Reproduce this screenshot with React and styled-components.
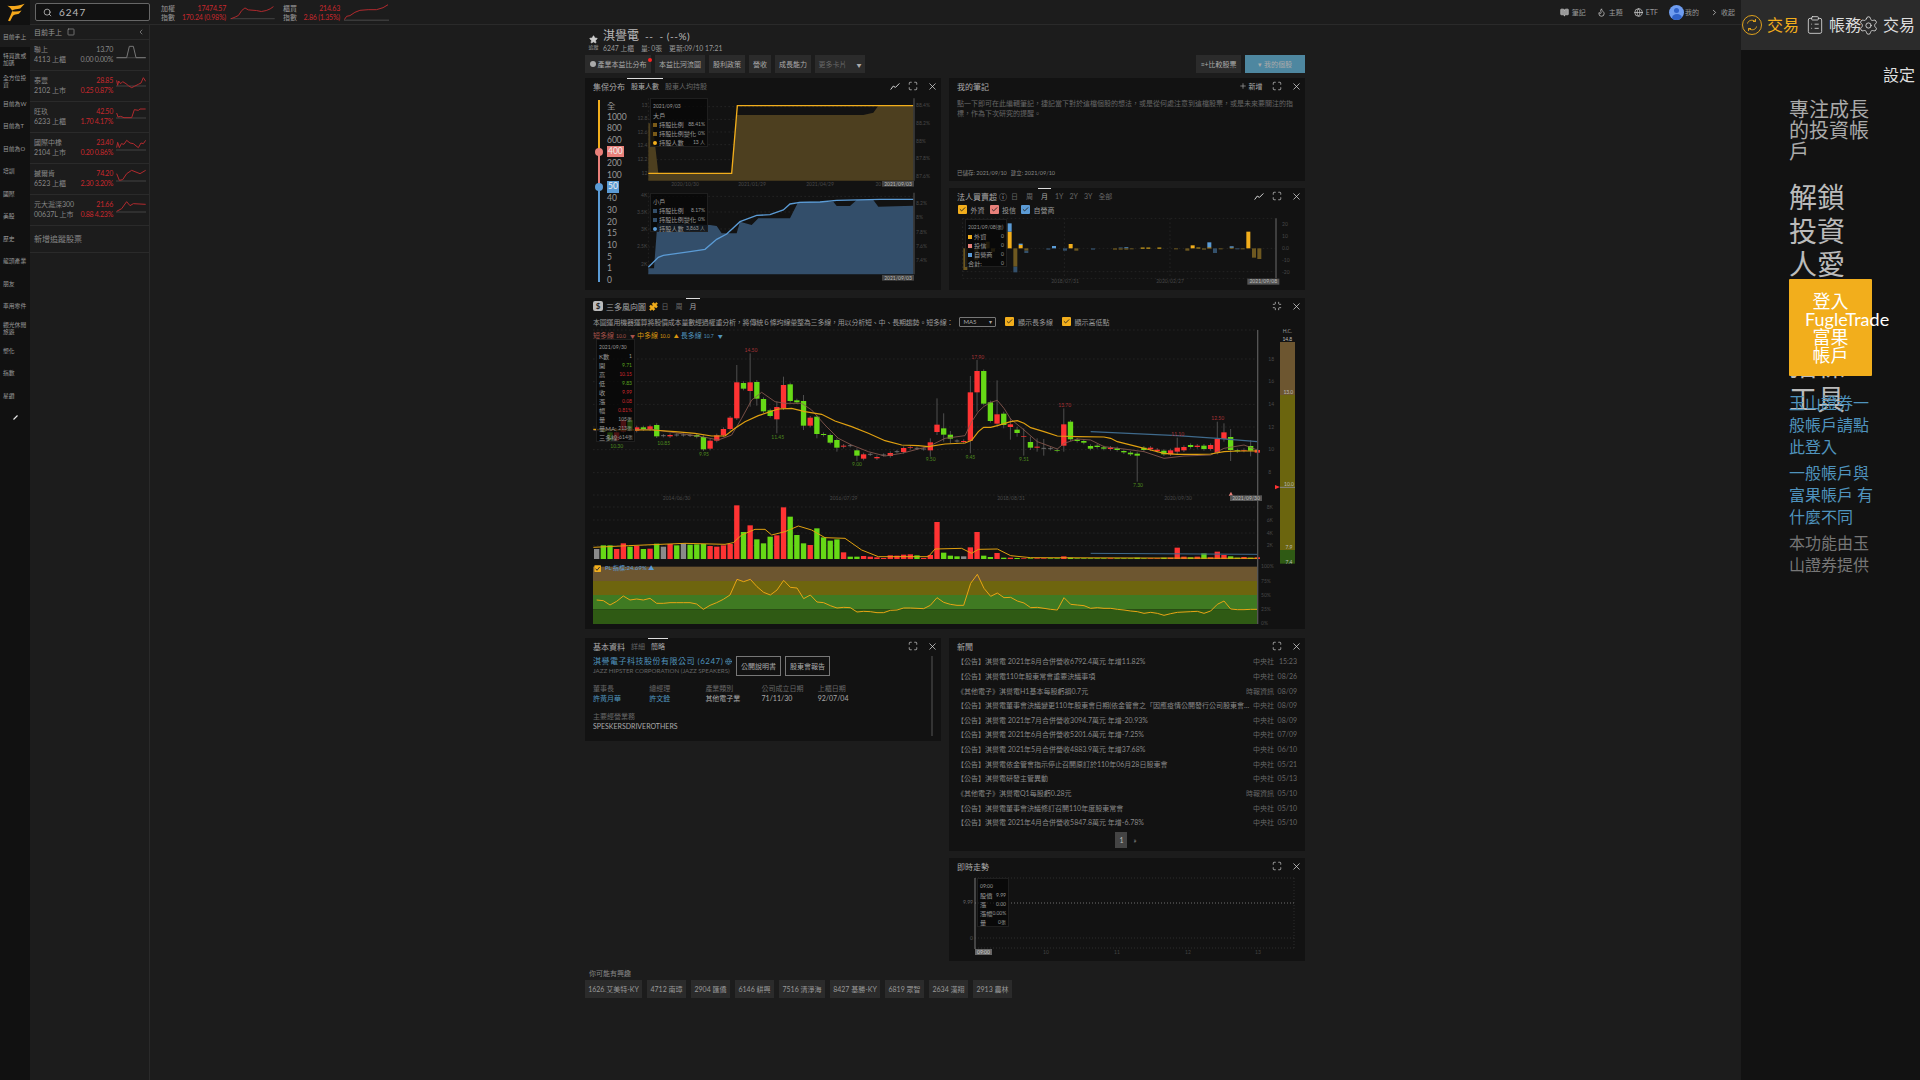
import React from "react";
import styled, { createGlobalStyle } from "styled-components";
import {
  BookOpen,
  Check,
  ChevronLeft,
  ChevronRight,
  ClipboardList,
  Flame,
  Globe,
  Maximize,
  Minimize,
  Plus,
  Puzzle,
  Search,
  Settings,
  Square,
  Star,
  X,
} from "lucide-react";

const ORANGE = "#f2ae1c";
const SALMON = "#e9807a";
const BLUE = "#5b9bd5";
const RED = "#ff3333";
const GREEN = "#66d916";

const GlobalStyle = createGlobalStyle`
  html, body { margin: 0; padding: 0; background: #1c1c1c; overflow: hidden; }
  body { font-family: Lato, "Noto Sans CJK TC", sans-serif; color: #aaa; }
  * { box-sizing: border-box; }
`;

const Page = styled.div`
  display: flex;
  width: 1920px;
  height: 1080px;
  overflow: hidden;
`;

/* left rail */
const Rail = styled.nav`
  width: 30px;
  flex: none;
  background: #111;
  display: flex;
  flex-direction: column;
`;
const LogoCell = styled.div`
  height: 25px;
  display: flex;
  align-items: center;
  justify-content: center;
`;
const RailItem = styled.div`
  height: 22.45px;
  padding: 0 2px 0 3px;
  display: flex;
  align-items: center;
  font-size: 5.8px;
  line-height: 7px;
  color: #999;
  background: ${(p) => (p.$active ? "#1c1c1c" : "transparent")};
`;
const RailPen = styled(RailItem)`
  justify-content: center;
`;

/* center column */
const Center = styled.div`
  flex: 1;
  display: flex;
  flex-direction: column;
  min-width: 0;
`;
const TopBar = styled.header`
  height: 25px;
  flex: none;
  display: flex;
  align-items: center;
  border-bottom: 1px solid #2a2a2a;
  padding: 0 6px 0 5px;
`;
const SearchBox = styled.div`
  width: 115px;
  height: 18px;
  display: flex;
  align-items: center;
  gap: 7px;
  padding-left: 7px;
  border: 1px solid #666;
  border-radius: 2px;
  background: #111;
  font-size: 10px;
  letter-spacing: 1px;
  color: #bbb;
`;
const IndexBlock = styled.div`
  margin-left: ${(p) => p.$ml}px;
  display: flex;
  align-items: center;
`;
const IndexLabels = styled.div`
  font-size: 7px;
  line-height: 9px;
  color: #999;
  width: 19px;
  padding-top: 1px;
`;
const IndexValues = styled.div`
  width: ${(p) => p.$w}px;
  padding-top: 1px;
  text-align: right;
  font-size: 7px;
  line-height: 9px;
  color: #c8282d;
  letter-spacing: -0.2px;
  white-space: nowrap;
`;
const Spark = styled.svg`
  display: block;
  flex: none;
  margin-left: ${(p) => p.$ml || 0}px;
`;
const TopRight = styled.div`
  margin-left: auto;
  display: flex;
  align-items: center;
`;
const TopLink = styled.div`
  display: flex;
  align-items: center;
  gap: ${(p) => p.$gap ?? 3}px;
  margin-left: ${(p) => p.$ml}px;
  font-size: 7px;
  color: #999;
`;
const Avatar = styled.div`
  width: 15px;
  height: 15px;
  border-radius: 50%;
  background: #6f9df0;
  position: relative;
  overflow: hidden;
  &::before {
    content: "";
    position: absolute;
    left: 5px;
    top: 3px;
    width: 5px;
    height: 5px;
    border-radius: 50%;
    background: #2f62c9;
  }
  &::after {
    content: "";
    position: absolute;
    left: 2.5px;
    top: 9px;
    width: 10px;
    height: 8px;
    border-radius: 50%;
    background: #2f62c9;
  }
`;

const Body = styled.div`
  flex: 1;
  display: flex;
  min-height: 0;
`;

/* watch list */
const Watch = styled.aside`
  width: 120px;
  flex: none;
  border-right: 1px solid #2a2a2a;
`;
const WatchHead = styled.div`
  height: 15px;
  display: flex;
  align-items: center;
  gap: 5px;
  padding: 0 4px 0 4px;
  font-size: 7px;
  color: #999;
  border-bottom: 1px solid #2a2a2a;
`;
const WatchChevron = styled.span`
  margin-left: auto;
  display: flex;
`;
const WatchRow = styled.div`
  height: 31px;
  display: flex;
  align-items: center;
  padding-left: 4px;
  border-bottom: 1px solid #2a2a2a;
  font-size: 7px;
  line-height: 9.8px;
`;
const WatchName = styled.div`
  width: 40px;
  color: #888;
  white-space: nowrap;
`;
const WatchNums = styled.div`
  width: 39px;
  text-align: right;
  letter-spacing: -0.25px;
  white-space: nowrap;
  color: ${(p) => (p.$up ? "#c8282d" : "#888")};
`;
const WatchAdd = styled.div`
  height: 27px;
  display: flex;
  align-items: center;
  padding: 0 0 2px 4px;
  border-bottom: 1px solid #2a2a2a;
  font-size: 8px;
  color: #888;
`;

/* main */
const Main = styled.main`
  flex: 1;
  min-width: 0;
  padding: 1px 0 0 435px;
`;
const Column = styled.div`
  width: 720px;
`;
const TitleRow = styled.div`
  height: 29px;
  display: flex;
  align-items: center;
  padding-left: 2px;
  gap: 3px;
`;
const StarCol = styled.div`
  width: 13px;
  display: flex;
  flex-direction: column;
  align-items: center;
  padding-top: 4px;
  font-size: 5px;
  line-height: 6px;
  color: #999;
`;
const TitleText = styled.div`
  display: flex;
  flex-direction: column;
`;
const TitleName = styled.div`
  font-size: 12px;
  line-height: 13px;
  color: #bbb;
  display: flex;
  align-items: baseline;
  gap: 6px;
  & > span {
    font-size: 10px;
    letter-spacing: 0.5px;
  }
`;
const TitleSub = styled.div`
  font-size: 6.8px;
  line-height: 10px;
  color: #999;
  display: flex;
  gap: 7px;
`;
const Tabs = styled.div`
  height: 18px;
  display: flex;
  gap: 4px;
  margin-bottom: 5px;
`;
const Tab = styled.div`
  position: relative;
  width: ${(p) => p.$w}px;
  height: 18px;
  display: flex;
  align-items: center;
  justify-content: center;
  gap: 2px;
  font-size: 7px;
  white-space: nowrap;
  color: ${(p) => (p.$dim ? "#666" : "#aaa")};
  background: ${(p) => p.$bg || "#2b2b2b"};
  margin-left: ${(p) => (p.$push ? "auto" : "0")};
`;
const RedDot = styled.i`
  position: absolute;
  right: -1px;
  top: 3px;
  width: 4px;
  height: 4px;
  border-radius: 50%;
  background: #f22;
`;
const Coin = styled.i`
  width: 6px;
  height: 6px;
  border-radius: 50%;
  background: #aaa;
`;
const Caret = styled.span`
  margin-left: 8px;
  font-size: 5px;
  color: #aaa;
`;

const TopGrid = styled.div`
  display: grid;
  grid-template-columns: 356px 356px;
  grid-template-rows: 103px 102px;
  gap: 7px 8px;
`;
const Card = styled.section`
  background: #121212;
  position: relative;
  display: flex;
  flex-direction: column;
  grid-row: ${(p) => p.$span || "auto"};
  margin-top: ${(p) => p.$mt || 0}px;
  height: ${(p) => (p.$h ? `${p.$h}px` : "auto")};
`;
const CardHead = styled.div`
  height: 16px;
  flex: none;
  display: flex;
  align-items: stretch;
  padding: 0 3.5px 0 8px;
  gap: 6px;
`;
const CardTitle = styled.div`
  display: flex;
  align-items: center;
  gap: 3px;
  font-size: 8px;
  color: #aaa;
  margin-right: ${(p) => p.$mr || 0}px;
`;
const SubTab = styled.div`
  position: relative;
  display: flex;
  align-items: center;
  font-size: 7px;
  padding: 0 ${(p) => p.$pad || 0}px;
  color: ${(p) => (p.$active ? "#aaa" : "#666")};
  &::before {
    content: "";
    display: ${(p) => (p.$active ? "block" : "none")};
    position: absolute;
    left: ${(p) => -(p.$bar || 2)}px;
    right: ${(p) => -(p.$bar || 2)}px;
    top: 0;
    height: 1px;
    background: #ddd;
  }
`;
const HeadTools = styled.div`
  margin-left: auto;
  display: flex;
  align-items: center;
  gap: 8.5px;
  color: #ddd;
`;
const AddNote = styled.div`
  display: flex;
  align-items: center;
  gap: 2px;
  font-size: 7px;
  color: #aaa;
  margin-right: 1px;
`;

const NoteText = styled.div`
  padding: 4px 8px 0;
  font-size: 7px;
  line-height: 10.3px;
  color: #666;
`;
const NoteFoot = styled.div`
  margin-top: auto;
  padding: 0 8px 4px;
  font-size: 5.5px;
  line-height: 8px;
  color: #888;
  display: flex;
  gap: 4px;
`;

const ChipRow = styled.div`
  display: flex;
  align-items: center;
  gap: ${(p) => p.$gap || 5}px;
  height: ${(p) => p.$h}px;
  padding: ${(p) => p.$pad};
  font-size: 7px;
  color: #999;
  flex: none;
`;
const CheckItem = styled.label`
  display: flex;
  align-items: center;
  gap: 3.5px;
`;
const CheckBox = styled.span`
  width: 9px;
  height: 9px;
  display: flex;
  align-items: center;
  justify-content: center;
  border-radius: 1px;
  background: ${(p) => p.$c};
  color: #222;
`;

const SplitRow = styled.div`
  flex: 1;
  display: flex;
  min-height: 0;
`;
const SliderCol = styled.div`
  position: relative;
  width: 55px;
  flex: none;
  padding: 5px 0 0 22px;
`;
const Track = styled.div`
  position: absolute;
  left: 13px;
  top: 6px;
  width: 2px;
  display: flex;
  flex-direction: column;
`;
const TrackSeg = styled.i`
  display: block;
  height: ${(p) => p.$h}px;
  background: ${(p) => p.$c};
`;
const Thumb = styled.i`
  position: absolute;
  left: 10px;
  top: ${(p) => p.$t}px;
  width: 8px;
  height: 8px;
  border-radius: 50%;
  background: ${(p) => p.$c};
`;
const Level = styled.div`
  height: 11.7px;
  display: flex;
  align-items: center;
  font-size: 8.5px;
  color: #999;
`;
const LevelBadge = styled.span`
  padding: 0 1px;
  line-height: 11.7px;
  color: #eee;
  background: ${(p) => p.$c};
`;
const ChartWrap = styled.div`
  position: relative;
  flex: none;
  width: ${(p) => p.$w}px;
  height: ${(p) => p.$h}px;
`;
const ChartSvg = styled.svg`
  display: block;
  position: relative;
  overflow: visible;
`;
const Tx = styled.text`
  font-size: ${(p) => p.$s || 15}px;
  fill: ${(p) => p.$c || "#484848"};
`;
const Tip = styled.div`
  position: absolute;
  left: ${(p) => p.$l}px;
  top: ${(p) => p.$t}px;
  width: ${(p) => p.$w}px;
  height: ${(p) => p.$h}px;
  padding: 3px 2px;
  background: rgba(6, 6, 6, 0.72);
  border: 1px solid #1f1f1f;
  font-size: 6.2px;
  line-height: ${(p) => p.$lh || 9}px;
  color: #999;
`;
const TipDate = styled.div`
  font-size: 5px;
  color: #999;
  white-space: nowrap;
`;
const TipRow = styled.div`
  display: flex;
  align-items: center;
  justify-content: space-between;
  white-space: nowrap;
`;
const TipLabel = styled.span`
  display: flex;
  align-items: center;
  gap: 2px;
`;
const TipSwatch = styled.i`
  width: 4px;
  height: 4px;
  border-radius: ${(p) => (p.$round ? "50%" : "0")};
  background: ${(p) => p.$c};
`;
const TipVal = styled.span`
  font-size: 5px;
  color: ${(p) => p.$c || "#999"};
`;

const DescRow = styled.div`
  height: 15px;
  flex: none;
  display: flex;
  align-items: center;
  padding: 0 8px;
  gap: 9px;
  font-size: 7px;
  color: #999;
  white-space: nowrap;
`;
const DescText = styled.span`
  letter-spacing: -0.2px;
  margin-right: -3px;
`;
const SelectBox = styled.div`
  width: 37px;
  height: 10px;
  padding: 0 3px;
  display: flex;
  align-items: center;
  justify-content: space-between;
  border: 1px solid #777;
  border-radius: 1px;
  font-size: 6px;
  color: #aaa;
`;
const Legend = styled.div`
  position: absolute;
  left: 8px;
  top: 0;
  height: 11px;
  display: flex;
  align-items: center;
  gap: 2px;
  font-size: 7px;
`;
const LegendItem = styled.span`
  color: ${(p) => p.$c};
  display: flex;
  align-items: baseline;
  gap: 2px;
  & > small {
    font-size: 5px;
  }
  & > em {
    font-style: normal;
    font-size: 5px;
    margin-left: 2px;
  }
`;
const Dollar = styled.span`
  width: 10px;
  height: 10px;
  border-radius: 2px;
  background: #bbb;
  color: #222;
  font-size: 8px;
  font-weight: 700;
  display: flex;
  align-items: center;
  justify-content: center;
`;

const LowerGrid = styled.div`
  display: grid;
  grid-template-columns: 356px 356px;
  gap: 8px;
  margin-top: 9px;
  align-items: start;
`;
const RightStack = styled.div`
  display: flex;
  flex-direction: column;
  gap: 7px;
`;
const CompanyRow = styled.div`
  display: flex;
  padding: 2px 8px 0;
  height: 22px;
`;
const CompanyName = styled.div`
  width: 143px;
`;
const CompanyLink = styled.div`
  display: flex;
  align-items: center;
  gap: 2px;
  font-size: 8px;
  line-height: 11px;
  letter-spacing: 0.5px;
  color: #4f93bd;
  white-space: nowrap;
`;
const CompanyEn = styled.div`
  font-size: 6.2px;
  line-height: 7px;
  color: #666;
  white-space: nowrap;
`;
const DocButton = styled.div`
  width: 45px;
  height: 20px;
  margin-right: 4px;
  display: flex;
  align-items: center;
  justify-content: center;
  border: 1px solid #777;
  font-size: 7px;
  color: #aaa;
`;
const InfoGrid = styled.div`
  display: grid;
  grid-template-columns: repeat(5, 56.2px);
  padding: 8px 8px 0;
`;
const InfoLabel = styled.div`
  font-size: 7px;
  line-height: 9.5px;
  color: #666;
`;
const InfoValue = styled.div`
  font-size: 7px;
  line-height: 9.5px;
  white-space: nowrap;
  color: ${(p) => (p.$link ? "#4f93bd" : "#aaa")};
`;
const InfoBlock = styled.div`
  padding: 9px 8px 0;
`;
const ScrollBar = styled.i`
  position: absolute;
  left: 346px;
  top: 18px;
  width: 2px;
  height: 80px;
  background: #333;
`;

const NewsList = styled.div`
  display: flex;
  flex-direction: column;
`;
const NewsRow = styled.div`
  height: 14.64px;
  display: flex;
  align-items: center;
  padding: 0 8px 0 8px;
  font-size: 7px;
  color: #888;
  white-space: nowrap;
`;
const NewsTitle = styled.div`
  flex: 1;
  min-width: 0;
  overflow: hidden;
  text-overflow: ellipsis;
`;
const NewsSource = styled.div`
  margin-left: 2px;
  color: #666;
`;
const NewsDate = styled.div`
  width: 20px;
  margin-left: 3px;
  text-align: right;
  color: #666;
`;
const Pager = styled.div`
  display: flex;
  justify-content: center;
  align-items: center;
  gap: 6px;
  margin-top: 2px;
  padding-right: 2px;
  font-size: 7px;
  color: #999;
`;
const PageCurrent = styled.div`
  width: 12px;
  height: 16px;
  display: flex;
  align-items: center;
  justify-content: center;
  background: #444;
  color: #bbb;
`;

const RelatedLabel = styled.div`
  margin-top: 6px;
  height: 13px;
  padding-left: 4px;
  font-size: 7px;
  line-height: 13px;
  color: #888;
`;
const Chips = styled.div`
  display: flex;
  gap: 5px;
`;
const Chip = styled.div`
  width: ${(p) => p.$w}px;
  height: 18px;
  display: flex;
  align-items: center;
  justify-content: center;
  background: #2b2b2b;
  font-size: 7px;
  color: #999;
  white-space: nowrap;
`;

/* side panel */
const Side = styled.aside`
  width: 179px;
  flex: none;
  background: #121212;
  display: flex;
  flex-direction: column;
`;
const SideHead = styled.div`
  height: 50px;
  flex: none;
  background: #2b2b2b;
  display: flex;
  align-items: flex-start;
  padding-left: 1px;
`;
const SideTab = styled.div`
  display: flex;
  align-items: center;
  height: 50px;
  flex: none;
  margin-left: ${(p) => p.$ml || 0}px;
  color: ${(p) => (p.$active ? ORANGE : "#ddd")};
`;
const SideTabText = styled.div`
  width: 32px;
  margin-left: ${(p) => p.$ml}px;
  font-size: 16px;
  line-height: 50px;
  align-self: flex-start;
`;
const SideBody = styled.div`
  padding: 49px 0 0 48px;
  width: 132px;
`;
const SideTitle = styled.h3`
  margin: 0;
  width: 83px;
  font-size: 20px;
  line-height: 21px;
  font-weight: 400;
  color: #aaa;
`;
const SideHeadline = styled.h2`
  margin: 19px 0 0;
  width: 83px;
  height: 98px;
  font-size: 28px;
  line-height: 33.6px;
  font-weight: 400;
  color: #bbb;
`;
const LoginButton = styled.button`
  position: relative;
  display: block;
  width: 83px;
  height: 97px;
  padding: 1px 16px 0;
  border: 0;
  border-radius: 1px;
  background: ${ORANGE};
  color: #fff;
  font-family: inherit;
  font-size: 18px;
  line-height: 18px;
  text-align: center;
  vertical-align: top;
`;
const SideLink = styled.div`
  width: 85px;
  margin-top: ${(p) => p.$mt}px;
  font-size: 16px;
  line-height: 22px;
  color: ${(p) => p.$c || "#4f93bd"};
`;

/* ---------- chart helpers ---------- */
const pts = (list) => list.map((p) => p.join(",")).join(" ");
const shift = (list, dx) => list.map(([x, y]) => [x + dx, y]);

const Dashes = ({ x1, x2, ys, vs = [], y1, y2 }) => (
  <g stroke="#2c2c2c" strokeWidth="2" strokeDasharray="5 7">
    {ys.map((y) => (
      <line key={y} x1={x1} x2={x2} y1={y} y2={y} />
    ))}
    {vs.map((x) => (
      <line key={x} x1={x} x2={x} y1={y1} y2={y2} />
    ))}
  </g>
);

const Sparkline = ({ box, line, base, color, width, height, ml }) => (
  <Spark viewBox={box} width={width} height={height} $ml={ml}>
    <line
      x1={box.split(" ")[0]}
      x2={Number(box.split(" ")[0]) + Number(box.split(" ")[2])}
      y1={base}
      y2={base}
      stroke="#3a3a3a"
      strokeWidth="4"
    />
    <polyline points={pts(line)} fill="none" stroke={color} strokeWidth="3" />
  </Spark>
);

const TrendIcon = () => (
  <svg width="10" height="7" viewBox="0 0 22 16" fill="none" stroke="#ddd" strokeWidth="2.2">
    <polyline points="1,15 7,7 12,10 21,1" />
  </svg>
);

const PenIcon = () => (
  <svg width="5" height="5" viewBox="0 0 5 5">
    <line x1="0.5" y1="4.5" x2="4.5" y2="0.5" stroke="#eee" strokeWidth="1.1" />
  </svg>
);

const Logo = () => (
  <svg width="19" height="19" viewBox="18 8 56 56">
    <path d="M73 10 L60 24 C50 26 42 26 36 30 C32 24 28 20 22 16 C38 18 56 16 73 10Z" fill="#f5a81c" />
    <path d="M64 30 L56 40 C48 42 42 42 38 46 L30 62 L24 60 C30 48 34 38 36 32 C44 34 54 34 64 30Z" fill="#f5a81c" />
  </svg>
);

const TradeIcon = () => (
  <svg width="20" height="20" viewBox="0 0 20 20" fill="none" stroke={ORANGE} strokeWidth="0.9">
    <circle cx="10" cy="10" r="9.5" />
    <path d="M5.5 8.5 C6 5.5 10 4 13.5 6.5 M13.5 6.5 V4 M13.5 6.5 H11" />
    <path d="M14.5 11.5 C14 14.5 10 16 6.5 13.5 M6.5 13.5 V16 M6.5 13.5 H9" />
  </svg>
);

/* ---------- data ---------- */
const railItems = [
  "目前手上", "特買進或加碼", "全方位投資", "目前為W", "目前為T", "目前為O", "培訓", "國際", "美股",
  "歷史", "龍頭產業", "朋友", "車用零件", "觀光休閒旅遊", "塑化", "指數", "星鑽",
];

const watchRows = [
  { name: "聯上", code: "4113 上櫃", price: "13.70", chg: "0.00 0.00%", up: false, box: "348 119 90 93", base: 172, color: "#777",
    line: [[350, 172], [380, 172], [388, 138], [400, 138], [408, 172], [437, 172]] },
  { name: "泰豐", code: "2102 上市", price: "28.85", chg: "0.25 0.87%", up: true, box: "348 212 90 93", base: 257, color: "#b22a2e",
    line: [[350, 240], [353, 255], [356, 242], [362, 250], [368, 244], [378, 250], [385, 256], [395, 262], [403, 258], [415, 252], [423, 248], [430, 232], [437, 243]] },
  { name: "旺玖", code: "6233 上櫃", price: "42.50", chg: "1.70 4.17%", up: true, box: "348 305 90 93", base: 353, color: "#b22a2e",
    line: [[350, 338], [354, 350], [362, 348], [372, 352], [395, 352], [403, 328], [415, 330], [420, 326], [437, 326]] },
  { name: "國際中橡", code: "2104 上市", price: "23.40", chg: "0.20 0.86%", up: true, box: "348 398 90 93", base: 449, color: "#b22a2e",
    line: [[350, 442], [353, 426], [358, 442], [364, 430], [372, 432], [380, 420], [390, 428], [400, 430], [415, 442], [423, 428], [430, 430], [437, 420]] },
  { name: "撼爾肯", code: "6523 上櫃", price: "74.20", chg: "2.30 3.20%", up: true, box: "348 491 90 93", base: 542, color: "#b22a2e",
    line: [[350, 520], [358, 540], [368, 538], [380, 520], [395, 510], [420, 520], [437, 510]] },
  { name: "元大滬深300", code: "00637L 上市", price: "21.66", chg: "0.88 4.23%", up: true, box: "348 584 90 93", base: 635, color: "#b22a2e",
    line: [[350, 633], [365, 625], [380, 604], [390, 616], [400, 610], [437, 612]] },
];

const levels = ["全", "1000", "800", "600", "400", "200", "100", "50", "40", "30", "20", "15", "10", "5", "1", "0"];

const newsRows = [
  ["【公告】淇譽電 2021年8月合併營收6792.4萬元 年增11.82%", "中央社", "15:23"],
  ["【公告】淇譽電110年股東常會重要決議事項", "中央社", "08/26"],
  ["《其他電子》淇譽電H1基本每股虧損0.7元", "時報資訊", "08/09"],
  ["【公告】淇譽電董事會決議變更110年股東會日期(依金管會之「因應疫情公開發行公司股東會延期召開相關事項", "中央社", "08/09"],
  ["【公告】淇譽電 2021年7月合併營收3094.7萬元 年增-20.93%", "中央社", "08/09"],
  ["【公告】淇譽電 2021年6月合併營收5201.6萬元 年增-7.25%", "中央社", "07/09"],
  ["【公告】淇譽電 2021年5月合併營收4883.9萬元 年增37.68%", "中央社", "06/10"],
  ["【公告】淇譽電依金管會指示停止召開原訂於110年06月28日股東會", "中央社", "05/21"],
  ["【公告】淇譽電研發主管異動", "中央社", "05/13"],
  ["《其他電子》淇譽電Q1每股虧0.28元", "時報資訊", "05/10"],
  ["【公告】淇譽電董事會決議修訂召開110年度股東常會", "中央社", "05/10"],
  ["【公告】淇譽電 2021年4月合併營收5847.8萬元 年增-6.78%", "中央社", "05/10"],
];

const chips = [
  ["1626 艾美特-KY", 57], ["4712 南璋", 39], ["2904 匯僑", 39], ["6146 耕興", 39], ["7516 清淨海", 46],
  ["8427 基勝-KY", 50], ["6819 眾智", 39], ["2634 漢翔", 39], ["2913 農林", 39],
];

// [type, top, bottom, volume top], in 3x coordinates of the chart
const candles = [
  ["n", 405, 405, 762], ["g", 405, 410, 751], ["g", 412, 436, 751], ["r", 412, 436, 762], ["r", 375, 410, 745],
  ["g", 375, 405, 755], ["r", 397, 407, 753], ["g", 397, 403, 762], ["r", 394, 403, 761], ["g", 390, 424, 746],
  ["n", 422, 422, 755], ["r", 420, 424, 747], ["n", 420, 420, 751], ["n", 420, 420, 745], ["n", 421, 421, 749],
  ["g", 420, 425, 748], ["g", 426, 463, 747], ["r", 437, 461, 753], ["r", 421, 437, 755], ["r", 402, 421, 751],
  ["r", 368, 402, 747], ["r", 262, 370, 631], ["g", 264, 281, 711], ["r", 262, 288, 691], ["g", 261, 311, 733],
  ["g", 312, 349, 745], ["g", 346, 363, 725], ["r", 336, 373, 721], ["r", 270, 340, 637], ["g", 268, 318, 665],
  ["g", 316, 322, 720], ["g", 318, 392, 745], ["r", 368, 392, 750], ["g", 365, 417, 700], ["g", 417, 420, 727],
  ["g", 420, 443, 737], ["g", 435, 458, 733], ["r", 452, 455, 772], ["n", 452, 452, 785], ["g", 466, 482, 785],
  ["r", 478, 491, 783], ["n", 478, 478, 785], ["r", 486, 490, 787], ["n", 480, 480, 789], ["r", 474, 483, 781],
  ["n", 470, 470, 782], ["r", 459, 471, 779], ["r", 457, 459, 778], ["n", 460, 460, 781], ["n", 462, 462, 789],
  ["r", 442, 466, 780], ["r", 389, 411, 681], ["g", 400, 419, 773], ["g", 419, 431, 782], ["n", 438, 438, 784],
  ["r", 438, 441, 784], ["r", 292, 437, 757], ["r", 228, 292, 711], ["g", 228, 326, 782], ["g", 322, 378, 786],
  ["r", 358, 386, 774], ["g", 356, 390, 788], ["r", 388, 396, 788], ["g", 404, 414, 789], ["r", 423, 425, 790],
  ["g", 441, 458, 790], ["r", 455, 458, 790], ["n", 460, 460, 790], ["n", 461, 461, 790], ["g", 465, 467, 790],
  ["r", 388, 452, 784], ["g", 380, 433, 788], ["g", 434, 438, 790], ["g", 438, 443, 790], ["g", 453, 461, 790],
  ["g", 452, 456, 790], ["g", 457, 461, 790], ["r", 458, 462, 790], ["g", 460, 465, 790], ["g", 468, 472, 790],
  ["g", 473, 478, 790], ["g", 476, 482, 788], ["g", 458, 465, 790], ["r", 458, 463, 790], ["r", 464, 468, 790],
  ["g", 467, 478, 788], ["r", 466, 478, 788], ["r", 458, 470, 758], ["r", 456, 466, 785], ["g", 450, 456, 787],
  ["r", 452, 456, 785], ["g", 452, 462, 775], ["r", 450, 462, 787], ["r", 432, 472, 770], ["r", 412, 432, 780],
  ["g", 426, 465, 784], ["g", 466, 469, 788], ["r", 465, 467, 786], ["g", 453, 467, 788], ["r", 465, 473, 787],
];

const wicks = {
  21: [210, 375], 23: [175, 335], 24: [255, 332], 27: [320, 415], 28: [245, 345], 31: [300, 405], 33: [360, 430],
  36: [430, 470], 39: [460, 498], 50: [430, 485], 51: [310, 420], 52: [355, 440], 53: [408, 445], 56: [243, 475],
  57: [195, 350], 60: [256, 395], 61: [350, 400], 62: [370, 434], 63: [395, 425], 64: [400, 482], 65: [425, 465],
  66: [430, 470], 67: [432, 482], 70: [340, 470], 81: [470, 560], 87: [428, 480], 93: [380, 478], 94: [385, 440],
  95: [402, 498], 98: [435, 484],
};

const midLine = [
  [25, 403], [100, 405], [200, 405], [270, 410], [330, 415], [380, 423], [420, 423], [450, 400], [480, 380], [520, 362],
  [580, 342], [620, 340], [660, 350], [710, 358], [750, 378], [800, 395], [850, 415], [900, 437], [950, 450], [1000, 452],
  [1030, 455], [1080, 447], [1140, 444], [1160, 436], [1180, 410],
  ...shift(
    [[71, 397], [92, 397], [112, 392], [132, 386], [152, 380], [172, 377], [192, 385], [212, 398], [252, 410], [292, 423],
      [352, 425], [432, 426], [452, 430], [472, 440], [532, 455], [572, 465], [612, 475], [652, 478], [712, 478], [752, 477],
      [792, 470], [832, 468], [892, 468]],
    1125
  ),
];
const shortLine = [
  [25, 405], [200, 403], [350, 425], [400, 435], [440, 420], [470, 370], [500, 315], [530, 292], [570, 320], [600, 325],
  [650, 325], [680, 345], [720, 390], [760, 430], [800, 450], [850, 470], [900, 483], [950, 475], [1000, 462], [1030, 455],
  [1080, 430], [1140, 422], [1160, 380], [1180, 350],
  ...shift(
    [[71, 335], [92, 322], [112, 316], [132, 340], [152, 372], [192, 405], [232, 440], [292, 462], [312, 445], [352, 432],
      [392, 435], [432, 455], [492, 462], [552, 470], [612, 490], [672, 483], [752, 480], [792, 460], [852, 450], [892, 465]],
    1125
  ),
];
const longLine = shift([[392, 410], [652, 422], [772, 430], [892, 440]], 1125);
const volAvg = [
  [25, 757], [130, 752], [300, 745], [420, 748], [445, 743], [470, 720], [510, 703], [540, 703], [560, 720], [600, 710],
  [640, 693], [680, 705], [720, 728], [780, 730], [830, 765], [880, 785], [1030, 785], [1050, 762], [1130, 760], [1160, 775],
  [1180, 763], [1237, 762], [1277, 782], [1337, 788], [2017, 790],
];
const plLine = [
  ...[[35, 300], [55, 302], [75, 315], [95, 304], [115, 288], [135, 300], [155, 297], [175, 300], [195, 295], [215, 310], [235, 310],
    [255, 308], [275, 308], [295, 308], [315, 308], [335, 312], [355, 328], [375, 316], [395, 308], [415, 298], [435, 285], [456, 238],
    [476, 245], [496, 238], [516, 260], [536, 277], [556, 285], [576, 270], [596, 241], [616, 262], [636, 264], [656, 296], [676, 285],
    [696, 306], [716, 308], [736, 317], [756, 324], [776, 322], [796, 323], [816, 336], [836, 334], [856, 335], [876, 338], [896, 338],
    [916, 331], [936, 330], [956, 324], [976, 324], [996, 325], [1016, 326], [1036, 316], [1056, 293], [1076, 307], [1096, 313],
    [1116, 316], [1136, 316]].map(([x, y]) => [x, y + 615]),
  ...shift(
    [[32, 865], [52, 838], [72, 880], [92, 904], [112, 894], [132, 908], [152, 907], [172, 918], [192, 924], [212, 938], [232, 937],
      [252, 940], [272, 943], [292, 945], [312, 908], [332, 928], [352, 930], [372, 932], [392, 940], [412, 938], [432, 940], [452, 940],
      [472, 943], [492, 945], [512, 948], [532, 950], [552, 955], [572, 952], [592, 955], [612, 961], [632, 956], [652, 952], [672, 951],
      [692, 950], [712, 949], [732, 955], [752, 948], [772, 928], [792, 918], [812, 942], [832, 944], [852, 944], [872, 943], [892, 943]],
    1125
  ),
];

const peaks = [
  ["14.50", 498, 172, "#a83237"], ["17.90", 1178, 193, "#a83237"], ["13.70", 1439, 337, "#a83237"], ["11.10", 1778, 424, "#a83237"],
  ["12.50", 1898, 376, "#a83237"], ["10.30", 95, 460, "#4e8a1e"], ["10.85", 236, 451, "#4e8a1e"], ["9.95", 357, 483, "#4e8a1e"],
  ["11.45", 578, 432, "#4e8a1e"], ["9.00", 816, 513, "#4e8a1e"], ["9.50", 1037, 499, "#4e8a1e"], ["9.45", 1156, 493, "#4e8a1e"],
  ["9.51", 1317, 498, "#4e8a1e"], ["7.30", 1659, 577, "#4e8a1e"],
];

// [x, top, bottom, colour]
const instBars = [
  [76, 625, 690, "#6e5820"], [92, 618, 625, "#6e5820"], [109, 625, 660, "#6e5820"], [143, 605, 625, "#6e5820"], [159, 625, 635, "#6e5820"],
  [209, 575, 625, ORANGE], [209, 550, 575, BLUE], [226, 625, 680, "#6e5820"], [226, 680, 697, "#33506b"], [242, 615, 625, ORANGE],
  [242, 611, 615, BLUE], [259, 625, 632, "#6e5820"], [259, 632, 639, "#33506b"], [325, 625, 629, "#33506b"], [342, 618, 625, BLUE],
  [375, 625, 632, "#33506b"], [392, 612, 625, ORANGE], [409, 625, 632, "#6e5820"], [459, 625, 629, "#33506b"], [525, 625, 629, "#6e5820"],
  [542, 622, 625, "#33506b"], [542, 625, 629, "#6e5820"], [559, 622, 625, BLUE], [559, 625, 629, "#6e5820"], [575, 625, 628, "#6e5820"],
  [608, 622, 627, "#9b7a1a"], [625, 622, 627, "#9b7a1a"], [658, 622, 627, "#9b7a1a"], [708, 625, 628, "#6e5820"], [742, 625, 632, "#6e5820"],
  [758, 616, 625, ORANGE], [775, 622, 626, "#9b7a1a"], [792, 625, 629, "#6e5820"], [808, 622, 625, ORANGE], [808, 607, 622, BLUE],
  [825, 625, 639, "#33506b"], [842, 625, 628, "#6e5820"], [875, 623, 625, ORANGE], [875, 619, 623, BLUE], [892, 625, 628, "#33506b"],
  [908, 625, 628, "#6e5820"], [925, 575, 625, ORANGE], [942, 625, 653, "#6e5820"], [958, 625, 657, "#6e5820"],
];

/* ---------- charts ---------- */
const HolderChart = () => (
  <ChartSvg viewBox="180 222 903 588" width="301" height="196">
    <Dashes x1={205} x2={1000} ys={[260, 298, 336, 374, 419, 460]} vs={[205]} y1={235} y2={482} />
    <polygon
      points={pts([[205, 310], [218, 310], [235, 460], [455, 460], [470, 285], [850, 285], [880, 278], [895, 257], [1000, 257], [1000, 482], [205, 482]])}
      fill="#4d3f1f"
    />
    <polyline points={pts([[205, 460], [455, 460], [472, 257], [1000, 257]])} fill="none" stroke={ORANGE} strokeWidth="4" />
    <line x1="1002" x2="1002" y1="235" y2="482" stroke="#444" strokeWidth="4" />
    {[["13", 255], ["12.8", 296], ["12.6", 336], ["12.4", 377], ["12.2", 419], ["12", 459]].map(([t, y]) => (
      <Tx key={t} x={202} y={y + 5} textAnchor="end">{t}</Tx>
    ))}
    {[["88.4%", 257], ["88.2%", 309], ["88%", 363], ["87.8%", 414], ["87.6%", 468]].map(([t, y]) => (
      <Tx key={t} x={1008} y={y + 5}>{t}</Tx>
    ))}
    {[["2020/10/30", 315], ["2021/01/29", 516], ["2021/04/29", 720], ["20", 895]].map(([t, x]) => (
      <Tx key={t} x={x} y={497} textAnchor="middle">{t}</Tx>
    ))}
    <rect x="906" y="483" width="96" height="17" fill="#444" />
    <Tx x={954} y={497} textAnchor="middle" $c="#bbb">2021/09/03</Tx>

    <Dashes x1={205} x2={1000} ys={[529, 576, 627, 681, 733]} vs={[205]} y1={518} y2={763} />
    <polygon
      points={pts([[205, 745], [222, 745], [232, 610], [390, 615], [410, 618], [425, 640], [470, 640], [480, 605], [515, 615], [535, 595], [630, 595], [655, 545], [760, 545], [770, 558], [810, 558], [830, 540], [880, 540], [895, 560], [1000, 557], [1000, 763], [205, 763]])}
      fill="#334e6a"
    />
    <polyline
      points={pts([[205, 742], [235, 712], [250, 706], [330, 695], [375, 688], [410, 658], [440, 642], [480, 605], [530, 586], [570, 584], [610, 570], [630, 552], [660, 547], [720, 546], [770, 541], [900, 538], [1000, 538]])}
      fill="none"
      stroke={BLUE}
      strokeWidth="4"
    />
    <line x1="1002" x2="1002" y1="518" y2="763" stroke="#444" strokeWidth="4" />
    {[["4K", 526], ["3.5K", 576], ["3K", 627], ["2.5K", 680], ["2K", 732]].map(([t, y]) => (
      <Tx key={t} x={202} y={y + 5} textAnchor="end">{t}</Tx>
    ))}
    {[["8.2%", 551], ["8%", 593], ["7.8%", 636], ["7.6%", 678], ["7.4%", 720]].map(([t, y]) => (
      <Tx key={t} x={1008} y={y + 5}>{t}</Tx>
    ))}
    <rect x="906" y="765" width="96" height="17" fill="#444" />
    <Tx x={954} y={779} textAnchor="middle" $c="#bbb">2021/09/03</Tx>
  </ChartSvg>
);

const InstChart = () => (
  <ChartSvg viewBox="27 525 1068 225" width="356" height="75">
    <Dashes x1={68} x2={1005} ys={[535, 625, 695, 715]} vs={[68, 373, 690]} y1={535} y2={715} />
    {instBars.map(([x, top, bottom, c], i) => (
      <rect key={i} x={x - 6} y={top} width="12" height={bottom - top} fill={c} />
    ))}
    <line x1="1008" x2="1008" y1="535" y2="715" stroke="#555" strokeWidth="4" />
    {[["20", 552], ["10", 588], ["0.0", 624], ["-10", 660], ["-20", 696]].map(([t, y]) => (
      <Tx key={t} x={1026} y={y + 5}>{t}</Tx>
    ))}
    <Tx x={375} y={730} textAnchor="middle">2018/07/31</Tx>
    <Tx x={690} y={730} textAnchor="middle">2020/02/27</Tx>
    <rect x="922" y="716" width="96" height="18" fill="#555" />
    <Tx x={970} y={730} textAnchor="middle" $c="#bbb">2021/09/08</Tx>
  </ChartSvg>
);

const TrendChart = () => (
  <ChartSvg viewBox="0 102 2160 900" width="720" height="300">
    <Dashes x1={24} x2={2018} ys={[105, 192, 260, 328, 396, 464, 533, 600, 636, 675, 714, 752]} />
    {candles.map(([type, top, bottom], i) => {
      const x = 35 + 20.02 * i;
      const [hi, lo] = wicks[i] || [top - 5, bottom + 5];
      return (
        <g key={i}>
          <line x1={x} x2={x} y1={hi} y2={lo} stroke="#5c5c5c" strokeWidth="2.5" />
          {type === "n" ? (
            <line x1={x - 7} x2={x + 7} y1={top} y2={top} stroke="#777" strokeWidth="2.5" />
          ) : (
            <rect x={x - 8} y={top} width="16" height={bottom - top} fill={type === "r" ? RED : GREEN} />
          )}
        </g>
      );
    })}
    {candles.map(([type, , , vol], i) => {
      const gray = [0, 10, 13, 55].includes(i);
      return (
        <rect
          key={i}
          x={35 + 20.02 * i - 8}
          y={vol}
          width="16"
          height={Math.max(792 - vol, 2)}
          fill={gray ? "#8a8a8a" : type === "r" ? RED : type === "g" ? GREEN : i % 2 ? RED : GREEN}
        />
      );
    })}
    <polyline points={pts(shortLine)} fill="none" stroke="#8a5a50" strokeWidth="2.5" />
    <polyline points={pts(midLine)} fill="none" stroke="#e0a010" strokeWidth="3.5" />
    <polyline points={pts(longLine)} fill="none" stroke="#3f6a8c" strokeWidth="3.5" />
    <polyline points={pts(volAvg)} fill="none" stroke="#e0a010" strokeWidth="3" />
    <polyline points={pts(shift([[392, 775], [892, 778]], 1125))} fill="none" stroke="#3f6a8c" strokeWidth="3" />
    {peaks.map(([t, x, y, c]) => (
      <Tx key={t + x} x={x} y={y} textAnchor="middle" $c={c}>{t}</Tx>
    ))}

    <rect x="24" y="815" width="1994" height="43" fill="#6d5630" />
    <rect x="24" y="858" width="1994" height="42" fill="#6e650e" />
    <rect x="24" y="900" width="1994" height="43" fill="#3f7a22" />
    <rect x="24" y="943" width="1994" height="44" fill="#2f5a14" />
    <polyline points={pts(plLine)} fill="none" stroke="#e8a514" strokeWidth="3" />
    <rect x="28" y="811" width="20" height="20" rx="2" fill={ORANGE} />
    <polyline points="32,821 36,826 44,816" fill="none" stroke="#333" strokeWidth="3" />
    <Tx x={60} y={826} $s={18} $c={BLUE}>PL 指標:24.69% ▲</Tx>

    <line x1="2018" x2="2018" y1="105" y2="987" stroke="#555" strokeWidth="4" />
    {[["18", 192], ["16", 260], ["14", 328], ["12", 396], ["10", 464], ["8", 533]].map(([t, y]) => (
      <Tx key={t} x={2050} y={y + 5}>{t}</Tx>
    ))}
    {[["8K", 636], ["6K", 675], ["4K", 714], ["2K", 752]].map(([t, y]) => (
      <Tx key={t} x={2045} y={y + 5}>{t}</Tx>
    ))}
    {[["100%", 813], ["75%", 858], ["50%", 900], ["25%", 942], ["0%", 984]].map(([t, y]) => (
      <Tx key={t} x={2028} y={y + 5}>{t}</Tx>
    ))}
    {[["2014/06/30", 275], ["2016/07/29", 776], ["2018/08/31", 1278], ["2020/09/30", 1779]].map(([t, x]) => (
      <Tx key={t} x={x} y={616} textAnchor="middle">{t}</Tx>
    ))}
    <polygon points="1938,602 1932,590 1945,590" fill={SALMON} transform="rotate(180 1938 596)" />
    <rect x="1935" y="601" width="96" height="17" fill="#555" />
    <Tx x={1983} y={615} textAnchor="middle" $c="#bbb">2021/09/30</Tx>

    <Tx x={2107} y={115} textAnchor="middle" $c="#999">H.C.</Tx>
    <Tx x={2107} y={137} textAnchor="middle" $c="#bbb">14.8</Tx>
    <rect x="2085" y="141" width="45" height="159" fill="#6d5630" />
    <rect x="2085" y="300" width="45" height="465" fill="#6b650e" />
    <rect x="2085" y="765" width="45" height="41" fill="#2f5a14" />
    <Tx x={2110} y={296} textAnchor="middle" $c="#bbb">13.0</Tx>
    <Tx x={2112} y={572} textAnchor="middle" $c="#bbb">10.0</Tx>
    <Tx x={2112} y={761} textAnchor="middle" $c="#bbb">7.9</Tx>
    <Tx x={2112} y={806} textAnchor="middle" $c="#bbb">7.4</Tx>
    <line x1="2085" x2="2130" y1="577" y2="577" stroke="#888" strokeWidth="3" />
    <polygon points="2070,570 2085,576 2070,583" fill={RED} />
  </ChartSvg>
);

const LiveChart = () => (
  <ChartSvg viewBox="949 874 356 87" width="356" height="87">
    <g stroke="#2c2c2c" strokeWidth="1" strokeDasharray="1 2">
      <line x1="975" x2="1294" y1="878" y2="878" />
      <line x1="975" x2="1294" y1="938" y2="938" />
      <line x1="975" x2="1294" y1="948" y2="948" />
      <line x1="1294" x2="1294" y1="878" y2="948" />
    </g>
    <line x1="975" x2="1294" y1="903" y2="903" stroke="#888" strokeDasharray="1 2" strokeWidth="0.8" />
    <line x1="975" x2="975" y1="878" y2="949" stroke="#777" strokeWidth="1" />
    <Tx x={973} y={904} textAnchor="end" $s={5} $c="#666">9.99</Tx>
    <Tx x={973} y={940} textAnchor="end" $s={5} $c="#555">0</Tx>
    {[["10", 1046], ["11", 1117], ["12", 1188], ["13", 1258]].map(([t, x]) => (
      <Tx key={t} x={x} y={954} textAnchor="middle" $s={5} $c="#444">{t}</Tx>
    ))}
    <rect x="975" y="949" width="17" height="6" fill="#666" />
    <Tx x={983.5} y={954} textAnchor="middle" $s={5} $c="#ccc">09:00</Tx>
  </ChartSvg>
);

const tipUp = "#c8282d";
const tipDown = "#5aa31e";

const CardTools = ({ trend, minimize }) => (
  <HeadTools>
    {trend && <TrendIcon />}
    {minimize ? <Minimize size={10} strokeWidth={1.6} /> : <Maximize size={10} strokeWidth={1.6} />}
    <X size={11} strokeWidth={1.6} />
  </HeadTools>
);

const Checked = ({ c, label }) => (
  <CheckItem>
    <CheckBox $c={c}>
      <Check size={7} strokeWidth={3} />
    </CheckBox>
    {label}
  </CheckItem>
);

const App = () => {
  return (
    <Page>
      <GlobalStyle />
      <Rail>
        <LogoCell>
          <Logo />
        </LogoCell>
        {railItems.map((t, i) => (
          <RailItem key={t} $active={i === 0}>{t}</RailItem>
        ))}
        <RailPen><PenIcon /></RailPen>
      </Rail>

      <Center>
        <TopBar>
          <SearchBox>
            <Search size={9} strokeWidth={2} color="#ccc" />
            6247
          </SearchBox>
          <IndexBlock $ml={11}>
            <IndexLabels>加權<br />指數</IndexLabels>
            <IndexValues $w={46}>17474.57<br />170.24&nbsp;(0.98%)</IndexValues>
            <Sparkline
              box="690 10 136 52"
              width={45}
              height={17}
              base={55}
              ml={4}
              color="#b22a2e"
              line={[[692, 55], [705, 50], [715, 45], [725, 30], [735, 22], [745, 28], [770, 30], [785, 33], [800, 30], [812, 25], [822, 18]]}
            />
          </IndexBlock>
          <IndexBlock $ml={8}>
            <IndexLabels>櫃買<br />指數</IndexLabels>
            <IndexValues $w={38}>214.63<br />2.86&nbsp;(1.35%)</IndexValues>
            <Sparkline
              box="1032 10 136 54"
              width={45}
              height={18}
              base={62}
              ml={4}
              color="#b22a2e"
              line={[[1033, 60], [1040, 50], [1050, 48], [1065, 38], [1080, 32], [1105, 30], [1130, 30], [1150, 24], [1165, 15]]}
            />
          </IndexBlock>
          <TopRight>
            <TopLink $ml={0}><BookOpen size={9} color="#bbb" fill="#999" />筆記</TopLink>
            <TopLink $ml={11}><Flame size={9} color="#ccc" />主題</TopLink>
            <TopLink $ml={11}><Globe size={9} color="#ccc" />ETF</TopLink>
            <TopLink $ml={11} $gap={1}><Avatar />我的</TopLink>
            <TopLink $ml={11} $gap={2}><ChevronRight size={9} color="#ccc" />收起</TopLink>
          </TopRight>
        </TopBar>

        <Body>
          <Watch>
            <WatchHead>
              目前手上
              <Square size={8} />
              <WatchChevron><ChevronLeft size={8} /></WatchChevron>
            </WatchHead>
            {watchRows.map((r) => (
              <WatchRow key={r.code}>
                <WatchName>{r.name}<br />{r.code}</WatchName>
                <WatchNums $up={r.up}>{r.price}<br />{r.chg}</WatchNums>
                <Sparkline box={r.box} width={30} height={31} base={r.base} color={r.color} line={r.line} ml={3} />
              </WatchRow>
            ))}
            <WatchAdd>新增追蹤股票</WatchAdd>
          </Watch>

          <Main>
            <Column>
              <TitleRow>
                <StarCol>
                  <Star size={9} fill="#ccc" color="#ccc" />
                  追蹤
                </StarCol>
                <TitleText>
                  <TitleName>淇譽電 <span>--&nbsp;&nbsp;- (--%)</span></TitleName>
                  <TitleSub>
                    <span>6247 上櫃</span>
                    <span>量: 0張</span>
                    <span>更新:09/10 17:21</span>
                  </TitleSub>
                </TitleText>
              </TitleRow>

              <Tabs>
                <Tab $w={66}><Coin />產業本益比分布<RedDot /></Tab>
                <Tab $w={50}>本益比河流圖</Tab>
                <Tab $w={36}>股利政策</Tab>
                <Tab $w={22}>營收</Tab>
                <Tab $w={36}>成長能力</Tab>
                <Tab $w={50} $dim>更多卡片<Caret>▼</Caret></Tab>
                <Tab $w={45} $push>≡+比較股票</Tab>
                <Tab $w={60} $bg="#4e87a0">▾ 我的個股</Tab>
              </Tabs>

              <TopGrid>
                <Card $span="span 2">
                  <CardHead>
                    <CardTitle>集保分布</CardTitle>
                    <SubTab $active $bar={4}>股東人數</SubTab>
                    <SubTab>股東人均持股</SubTab>
                    <CardTools trend />
                  </CardHead>
                  <SplitRow>
                    <SliderCol>
                      <Track>
                        <TrackSeg $h={52} $c={ORANGE} />
                        <TrackSeg $h={35} $c={SALMON} />
                        <TrackSeg $h={95} $c={BLUE} />
                      </Track>
                      <Thumb $t={54} $c={SALMON} />
                      <Thumb $t={89} $c={BLUE} />
                      {levels.map((t) => (
                        <Level key={t}>
                          {t === "400" ? (
                            <LevelBadge $c={SALMON}>{t}</LevelBadge>
                          ) : t === "50" ? (
                            <LevelBadge $c={BLUE}>{t}</LevelBadge>
                          ) : (
                            t
                          )}
                        </Level>
                      ))}
                    </SliderCol>
                    <ChartWrap $w={301} $h={196}>
                      <HolderChart />
                      <Tip $l={10} $t={4} $w={58} $h={49}>
                        <TipDate>2021/09/03</TipDate>
                        <TipRow>大戶</TipRow>
                        <TipRow><TipLabel><TipSwatch $c="#7a5a18" />持股比例</TipLabel><TipVal>88.41%</TipVal></TipRow>
                        <TipRow><TipLabel><TipSwatch $c="#7a5a18" />持股比例變化</TipLabel><TipVal>0%</TipVal></TipRow>
                        <TipRow><TipLabel><TipSwatch $round $c={ORANGE} />持股人數</TipLabel><TipVal>13 人</TipVal></TipRow>
                      </Tip>
                      <Tip $l={10} $t={99} $w={58} $h={39}>
                        <TipRow>小戶</TipRow>
                        <TipRow><TipLabel><TipSwatch $c="#334e6a" />持股比例</TipLabel><TipVal>8.17%</TipVal></TipRow>
                        <TipRow><TipLabel><TipSwatch $c="#334e6a" />持股比例變化</TipLabel><TipVal>0%</TipVal></TipRow>
                        <TipRow><TipLabel><TipSwatch $round $c={BLUE} />持股人數</TipLabel><TipVal>3,863 人</TipVal></TipRow>
                      </Tip>
                    </ChartWrap>
                  </SplitRow>
                </Card>

                <Card>
                  <CardHead>
                    <CardTitle>我的筆記</CardTitle>
                    <HeadTools>
                      <AddNote><Plus size={8} />新增</AddNote>
                      <Maximize size={10} strokeWidth={1.6} />
                      <X size={11} strokeWidth={1.6} />
                    </HeadTools>
                  </CardHead>
                  <NoteText>
                    點一下即可在此編輯筆記，捷記當下對於這檔個股的想法，或是從何處注意到這檔股票，或是未來要關注的指標，作為下次研究的提醒。
                  </NoteText>
                  <NoteFoot>
                    <span>已儲存: 2021/09/10</span>
                    <span>建立: 2021/09/10</span>
                  </NoteFoot>
                </Card>

                <Card>
                  <CardHead>
                    <CardTitle $mr={-3}>法人買賣超 ⓘ</CardTitle>
                    <SubTab $pad={1}>日</SubTab>
                    <SubTab $pad={1}>周</SubTab>
                    <SubTab $pad={1} $active>月</SubTab>
                    <SubTab>1Y</SubTab>
                    <SubTab>2Y</SubTab>
                    <SubTab>3Y</SubTab>
                    <SubTab>全部</SubTab>
                    <CardTools trend />
                  </CardHead>
                  <ChipRow $h={11} $pad="0 0 0 9px">
                    <Checked c={ORANGE} label="外資" />
                    <Checked c={SALMON} label="投信" />
                    <Checked c={BLUE} label="自營商" />
                  </ChipRow>
                  <ChartWrap $w={356} $h={75}>
                    <InstChart />
                    <Tip $l={16} $t={4} $w={42} $h={48}>
                      <TipDate>2021/09/08(張)</TipDate>
                      <TipRow><TipLabel><TipSwatch $c={ORANGE} />外資</TipLabel><TipVal>0</TipVal></TipRow>
                      <TipRow><TipLabel><TipSwatch $c={SALMON} />投信</TipLabel><TipVal>0</TipVal></TipRow>
                      <TipRow><TipLabel><TipSwatch $c={BLUE} />自營商</TipLabel><TipVal>0</TipVal></TipRow>
                      <TipRow><TipLabel>合計:</TipLabel><TipVal>0</TipVal></TipRow>
                    </Tip>
                  </ChartWrap>
                </Card>
              </TopGrid>

              <Card $mt={8} $h={331}>
                <CardHead>
                  <CardTitle $mr={-3}><Dollar>$</Dollar>三多風向圖<Puzzle size={9} fill={ORANGE} color={ORANGE} /></CardTitle>
                  <SubTab $pad={0.5}>日</SubTab>
                  <SubTab $pad={0.5}>周</SubTab>
                  <SubTab $pad={0.5} $active $bar={3}>月</SubTab>
                  <CardTools minimize />
                </CardHead>
                <DescRow>
                  <DescText>本圖運用機器運算將股價成本量數經過權重分析，將傳統６條均線彙整為三多線，用以分析短、中、長期趨勢。短多線：</DescText>
                  <SelectBox>MA5<span>▾</span></SelectBox>
                  <Checked c={ORANGE} label="顯示長多線" />
                  <Checked c={ORANGE} label="顯示高低點" />
                </DescRow>
                <ChartWrap $w={720} $h={300}>
                  <TrendChart />
                  <Legend>
                    <LegendItem $c="#a8534a">短多線<small>10.0</small><em>▼</em></LegendItem>
                    <LegendItem $c="#d9960f">中多線<small>10.0</small><em>▲</em></LegendItem>
                    <LegendItem $c="#4f93bd">長多線<small>10.7</small><em>▼</em></LegendItem>
                  </Legend>
                  <Tip $l={11} $t={10} $w={39} $h={103}>
                    <TipDate>2021/09/30</TipDate>
                    <TipRow><TipLabel>K數</TipLabel><TipVal>1</TipVal></TipRow>
                    <TipRow><TipLabel>開</TipLabel><TipVal $c={tipDown}>9.71</TipVal></TipRow>
                    <TipRow><TipLabel>高</TipLabel><TipVal $c={tipUp}>10.15</TipVal></TipRow>
                    <TipRow><TipLabel>低</TipLabel><TipVal $c={tipDown}>9.83</TipVal></TipRow>
                    <TipRow><TipLabel>收</TipLabel><TipVal $c={tipUp}>9.99</TipVal></TipRow>
                    <TipRow><TipLabel>漲</TipLabel><TipVal $c={tipUp}>0.08</TipVal></TipRow>
                    <TipRow><TipLabel>幅</TipLabel><TipVal $c={tipUp}>0.81%</TipVal></TipRow>
                    <TipRow><TipLabel>量</TipLabel><TipVal>105張</TipVal></TipRow>
                    <TipRow><TipLabel>量MA:</TipLabel><TipVal>213張</TipVal></TipRow>
                    <TipRow><TipLabel>三多線:</TipLabel><TipVal>614張</TipVal></TipRow>
                  </Tip>
                </ChartWrap>
              </Card>

              <LowerGrid>
                <Card $h={103}>
                  <CardHead>
                    <CardTitle>基本資料</CardTitle>
                    <SubTab>詳細</SubTab>
                    <SubTab $active $bar={3}>簡略</SubTab>
                    <CardTools />
                  </CardHead>
                  <CompanyRow>
                    <CompanyName>
                      <CompanyLink>淇譽電子科技股份有限公司 (6247) <Globe size={7} /></CompanyLink>
                      <CompanyEn>JAZZ HIPSTER CORPORATION (JAZZ SPEAKERS)</CompanyEn>
                    </CompanyName>
                    <DocButton>公開說明書</DocButton>
                    <DocButton>股東會報告</DocButton>
                  </CompanyRow>
                  <InfoGrid>
                    <div><InfoLabel>董事長</InfoLabel><InfoValue $link>許黃月華</InfoValue></div>
                    <div><InfoLabel>總經理</InfoLabel><InfoValue $link>許文銓</InfoValue></div>
                    <div><InfoLabel>產業類別</InfoLabel><InfoValue>其他電子業</InfoValue></div>
                    <div><InfoLabel>公司成立日期</InfoLabel><InfoValue>71/11/30</InfoValue></div>
                    <div><InfoLabel>上櫃日期</InfoLabel><InfoValue>92/07/04</InfoValue></div>
                  </InfoGrid>
                  <InfoBlock>
                    <InfoLabel>主要經營業務</InfoLabel>
                    <InfoValue>SPESKERSDRIVEROTHERS</InfoValue>
                  </InfoBlock>
                  <ScrollBar />
                </Card>

                <RightStack>
                  <Card $h={213}>
                    <CardHead>
                      <CardTitle>新聞</CardTitle>
                      <CardTools />
                    </CardHead>
                    <NewsList>
                      {newsRows.map(([title, source, date], i) => (
                        <NewsRow key={i}>
                          <NewsTitle>{title}</NewsTitle>
                          <NewsSource>{source}</NewsSource>
                          <NewsDate>{date}</NewsDate>
                        </NewsRow>
                      ))}
                    </NewsList>
                    <Pager><PageCurrent>1</PageCurrent>»</Pager>
                  </Card>
                  <Card $h={103}>
                    <CardHead>
                      <CardTitle>即時走勢</CardTitle>
                      <CardTools />
                    </CardHead>
                    <ChartWrap $w={356} $h={87}>
                      <LiveChart />
                      <Tip $l={28} $t={4} $w={32} $h={49}>
                        <TipDate>09:00</TipDate>
                        <TipRow><TipLabel>股價</TipLabel><TipVal>9.99</TipVal></TipRow>
                        <TipRow><TipLabel>漲</TipLabel><TipVal>0.00</TipVal></TipRow>
                        <TipRow><TipLabel>漲幅</TipLabel><TipVal>0.00%</TipVal></TipRow>
                        <TipRow><TipLabel>量</TipLabel><TipVal>0張</TipVal></TipRow>
                      </Tip>
                    </ChartWrap>
                  </Card>
                </RightStack>
              </LowerGrid>

              <RelatedLabel>你可能有興趣</RelatedLabel>
              <Chips>
                {chips.map(([t, w]) => (
                  <Chip key={t} $w={w}>{t}</Chip>
                ))}
              </Chips>
            </Column>
          </Main>
        </Body>
      </Center>

      <Side>
        <SideHead>
          <SideTab $active>
            <TradeIcon />
            <SideTabText $ml={5}>交易</SideTabText>
          </SideTab>
          <SideTab $ml={6}>
            <ClipboardList size={20} strokeWidth={1} />
            <SideTabText $ml={4}>帳務</SideTabText>
          </SideTab>
          <SideTab $ml={-3}>
            <Settings size={21} strokeWidth={1} />
            <SideTabText $ml={4}>交易設定</SideTabText>
          </SideTab>
        </SideHead>
        <SideBody>
          <SideTitle>專注成長的投資帳戶</SideTitle>
          <SideHeadline>解鎖投資人愛用的進階指標工具</SideHeadline>
          <LoginButton>登入FugleTrade富果帳戶</LoginButton>
          <SideLink $mt={16}>玉山證券一般帳戶請點此登入</SideLink>
          <SideLink $mt={4}>一般帳戶與富果帳戶 有什麼不同</SideLink>
          <SideLink $mt={4} $c="#777">本功能由玉山證券提供</SideLink>
        </SideBody>
      </Side>
    </Page>
  );
};

export default App;
